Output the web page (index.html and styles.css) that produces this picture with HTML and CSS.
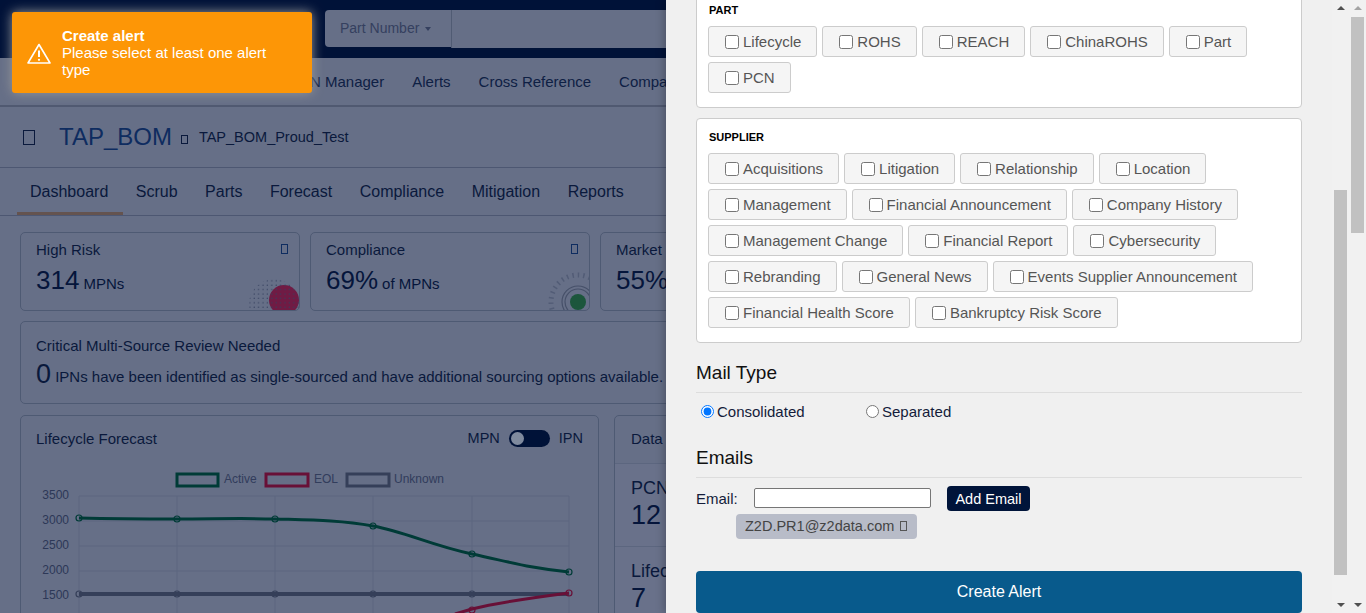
FILE: index.html
```html
<!DOCTYPE html>
<html lang="en">
<head>
  <meta charset="UTF-8" />
  <meta name="viewport" content="width=device-width, initial-scale=1.0" />
  <title>Create Alert | TAP_BOM</title>
  <link rel="stylesheet" href="styles.css">
</head>
<body>

  <div class="page">
    <header class="topbar">
      <div class="part-select">Part Number <span class="caret"></span></div>
      <div class="search-box"></div>
    </header>

    <nav class="mainnav">
      <a>PN Manager</a>
      <a>Alerts</a>
      <a>Cross Reference</a>
      <a>Compare</a>
    </nav>

    <div class="titlerow">
      <span class="tofu tofu-lg"></span>
      <h1>TAP_BOM</h1>
      <span class="tofu tofu-sm"></span>
      <span class="subtitle">TAP_BOM_Proud_Test</span>
    </div>

    <div class="tabs">
      <a class="active">Dashboard</a>
      <a>Scrub</a>
      <a>Parts</a>
      <a>Forecast</a>
      <a>Compliance</a>
      <a>Mitigation</a>
      <a>Reports</a>
    </div>

    <div class="content">
      <div class="stats">
        <div class="card stat">
          <div class="stat-title">High Risk</div>
          <div class="stat-value">314<small>MPNs</small></div>
          <span class="tofu tofu-card"></span>
          <svg class="stat-art" width="60" height="40" viewBox="0 0 60 40">
            <defs>
              <pattern id="dots" width="4.4" height="4.4" patternUnits="userSpaceOnUse">
                <circle cx="2" cy="2" r="0.7" fill="#6a6a80"/>
              </pattern>
            </defs>
            <circle cx="45" cy="30" r="15" fill="#e0204a"/>
            <circle cx="35" cy="34" r="25" fill="url(#dots)"/>
          </svg>
        </div>
        <div class="card stat">
          <div class="stat-title">Compliance</div>
          <div class="stat-value">69%<small>of MPNs</small></div>
          <span class="tofu tofu-card"></span>
          <svg class="stat-art" width="60" height="40" viewBox="0 0 60 40">
            <circle cx="49" cy="32" r="27" fill="none" stroke="#a4a2ae" stroke-width="5" stroke-dasharray="1.5 4"/>
            <circle cx="49" cy="32" r="16" fill="none" stroke="#8c8a94" stroke-width="1.2"/>
            <circle cx="49" cy="32" r="13" fill="none" stroke="#8c8a94" stroke-width="1.2"/>
            <circle cx="49" cy="32" r="8" fill="#38963a"/>
          </svg>
        </div>
        <div class="card stat">
          <div class="stat-title">Market</div>
          <div class="stat-value">55%</div>
        </div>
      </div>

      <div class="card review">
        <div class="review-title">Critical Multi-Source Review Needed</div>
        <div class="review-text"><b>0</b> IPNs have been identified as single-sourced and have additional sourcing options available.</div>
      </div>

      <div class="panels">
        <div class="card forecast">
          <div class="forecast-head">
            <span>Lifecycle Forecast</span>
            <div class="unit-switch">
              <span>MPN</span>
              <span class="toggle"><span class="knob"></span></span>
              <span>IPN</span>
            </div>
          </div>
          <svg class="chart" width="579" height="143" viewBox="20 470 579 143">
            <g class="grid">
              <path d="M79 496H569M79 521H569M79 546H569M79 571H569M79 595H569"/>
              <path d="M79 496V613M177 496V613M275 496V613M373 496V613M472 496V613M569 496V613"/>
            </g>
            <g class="axis">
              <text x="69" y="499">3500</text>
              <text x="69" y="524">3000</text>
              <text x="69" y="549">2500</text>
              <text x="69" y="574">2000</text>
              <text x="69" y="599">1500</text>
            </g>
            <g class="legend">
              <rect x="177" y="474" width="41" height="12" class="s-active"/>
              <text x="224" y="483">Active</text>
              <rect x="266" y="474" width="42" height="12" class="s-eol"/>
              <text x="314" y="483">EOL</text>
              <rect x="347" y="474" width="42" height="12" class="s-unknown"/>
              <text x="394" y="483">Unknown</text>
            </g>
            <path class="line line-thick s-unknown" d="M79 594H569"/>
            <g class="pts s-unknown">
              <circle cx="79" cy="594" r="3"/><circle cx="177" cy="594" r="3"/><circle cx="275" cy="594" r="3"/>
              <circle cx="373" cy="594" r="3"/><circle cx="472" cy="594" r="3"/>
            </g>
            <path class="line s-active" d="M79 518C120 519 140 519 177 519S240 518 275 519S340 520 373 526S430 545 472 554S530 568 569 572"/>
            <g class="pts s-active">
              <circle cx="79" cy="518" r="3"/><circle cx="177" cy="519" r="3"/><circle cx="275" cy="519" r="3"/>
              <circle cx="373" cy="526" r="3"/><circle cx="472" cy="554" r="3"/><circle cx="569" cy="572" r="3"/>
            </g>
            <path class="line s-eol" d="M455 614L472 609C500 602 530 598 569 593"/>
            <g class="pts s-eol">
              <circle cx="472" cy="610" r="3"/><circle cx="569" cy="593" r="3"/>
            </g>
          </svg>
        </div>

        <div class="card data-card">
          <div class="data-head">Data</div>
          <div class="data-row">
            <div class="data-label">PCN</div>
            <div class="data-value">12</div>
          </div>
          <div class="data-row">
            <div class="data-label">Lifecycle</div>
            <div class="data-value">7</div>
          </div>
        </div>
      </div>
    </div>
  </div>

  <div class="overlay"></div>

  <aside class="drawer">
    <div class="drawer-body">
      <section class="group group-part">
        <h5>PART</h5>
        <div class="chips">
          <label class="chip"><input type="checkbox">Lifecycle</label>
          <label class="chip"><input type="checkbox">ROHS</label>
          <label class="chip"><input type="checkbox">REACH</label>
          <label class="chip"><input type="checkbox">ChinaROHS</label>
          <label class="chip"><input type="checkbox">Part</label>
          <label class="chip"><input type="checkbox">PCN</label>
        </div>
      </section>

      <section class="group">
        <h5>SUPPLIER</h5>
        <div class="chips">
          <label class="chip"><input type="checkbox">Acquisitions</label>
          <label class="chip"><input type="checkbox">Litigation</label>
          <label class="chip"><input type="checkbox">Relationship</label>
          <label class="chip"><input type="checkbox">Location</label>
          <label class="chip"><input type="checkbox">Management</label>
          <label class="chip"><input type="checkbox">Financial Announcement</label>
          <label class="chip"><input type="checkbox">Company History</label>
          <label class="chip"><input type="checkbox">Management Change</label>
          <label class="chip"><input type="checkbox">Financial Report</label>
          <label class="chip"><input type="checkbox">Cybersecurity</label>
          <label class="chip"><input type="checkbox">Rebranding</label>
          <label class="chip"><input type="checkbox">General News</label>
          <label class="chip"><input type="checkbox">Events Supplier Announcement</label>
          <label class="chip"><input type="checkbox">Financial Health Score</label>
          <label class="chip"><input type="checkbox">Bankruptcy Risk Score</label>
        </div>
      </section>

      <h3 class="section-title mail-title">Mail Type</h3>
      <div class="radios">
        <label class="radio"><input type="radio" name="mailType" checked>Consolidated</label>
        <label class="radio"><input type="radio" name="mailType">Separated</label>
      </div>

      <h3 class="section-title">Emails</h3>
      <div class="email-row">
        <label class="email-label">Email:</label>
        <input class="email-input" type="text">
        <button class="add-email">Add Email</button>
      </div>
      <div class="email-tag">Z2D.PR1@z2data.com <span class="tofu tofu-tag"></span></div>

      <button class="create-alert">Create Alert</button>
    </div>

    <div class="scrollbar">
      <span class="arrow-up"></span>
      <div class="track"><div class="thumb thumb-inner"></div></div>
      <span class="arrow-down"></span>
    </div>
    <div class="scrollbar">
      <span class="arrow-up arrow-off"></span>
      <div class="track"><div class="thumb thumb-outer"></div></div>
      <span class="arrow-down"></span>
    </div>
  </aside>

  <div class="toast">
    <svg class="toast-icon" width="24" height="21" viewBox="0 0 24 21">
      <path d="M12 1.5L23 20H1Z" fill="none" stroke="#fff" stroke-width="1.6" stroke-linejoin="round"/>
      <path d="M12 7.5V14" stroke="#fff" stroke-width="2"/>
      <circle cx="12" cy="16.8" r="1.1" fill="#fff"/>
    </svg>
    <div class="toast-text">
      <strong>Create alert</strong>
      <div>Please select at least one alert type</div>
    </div>
  </div>

</body>
</html>
```

FILE: styles.css
```css
html, body {
  margin: 0;
  height: 613px;
  overflow: hidden;
}

body {
  font-family: 'Liberation Sans', Arial, sans-serif;
  color: #141c3a;
  background: #ccc8d0;
}

.page {
  width: 1366px;
  height: 613px;
  overflow: hidden;
}

.topbar {
  height: 58px;
  box-sizing: border-box;
  background: #000e32;
  padding: 10px 0 0 325px;
  display: flex;
  align-items: flex-start;
}

.part-select {
  width: 126px;
  height: 37px;
  box-sizing: border-box;
  padding-left: 15px;
  line-height: 36px;
  font-size: 14px;
  color: #6a6a80;
  background: #ccc8d0;
  border-radius: 4px 0 0 4px;
}

.caret {
  display: inline-block;
  margin-left: 2px;
  vertical-align: 2px;
  border-top: 4px solid #6a6a80;
  border-left: 3px solid transparent;
  border-right: 3px solid transparent;
}

.search-box {
  flex: 1;
  height: 38px;
  background: #ccc8d0;
  border-left: 1px solid #a0a0a8;
}

.mainnav {
  height: 49px;
  box-sizing: border-box;
  padding-left: 300px;
  display: flex;
  align-items: center;
  gap: 28px;
  font-size: 15px;
  color: #1c2a4a;
  border-bottom: 2px solid #a09ca4;
}

.mainnav a {
  white-space: nowrap;
}

.titlerow {
  height: 61px;
  box-sizing: border-box;
  padding-left: 23px;
  display: flex;
  align-items: center;
  border-bottom: 1px solid #9a98a6;
}

.titlerow h1 {
  margin: 0 9px 0 24px;
  font-size: 24px;
  font-weight: 400;
  color: #1c4282;
}

.subtitle {
  margin-left: 11px;
  font-size: 14.5px;
}

.tofu {
  display: inline-block;
  box-sizing: border-box;
  border: 1px solid #141c3a;
}

.tofu-lg {
  width: 12px;
  height: 15px;
}

.tofu-sm {
  width: 7px;
  height: 9px;
  margin-top: 5px;
}

.tofu-card {
  position: absolute;
  top: 11px;
  right: 11px;
  width: 7px;
  height: 10px;
  border-color: #1c4282;
}

.tofu-tag {
  width: 7px;
  height: 10px;
  margin-left: 2px;
  border-color: #555;
}

.tabs {
  height: 48px;
  box-sizing: border-box;
  padding-left: 17px;
  display: flex;
  border-bottom: 1px solid #9a98a6;
  font-size: 16px;
}

.tabs a {
  padding: 15px 14.5px 0 13px;
  height: 47px;
  box-sizing: border-box;
}

.tabs a.active {
  border-bottom: 3px solid #c89060;
}

.content {
  padding: 16px 0 0 20px;
  width: 1400px;
}

.card {
  box-sizing: border-box;
  border: 1px solid #9c9ea8;
  border-radius: 5px;
}

.stats {
  display: flex;
  gap: 10px;
}

.stat {
  position: relative;
  width: 280px;
  height: 79px;
  padding: 8px 15px;
  overflow: hidden;
}

.stat-title {
  font-size: 15px;
  line-height: 17px;
}

.stat-value {
  margin-top: 7px;
  font-size: 26px;
  line-height: 30px;
  color: #0a1538;
}

.stat-value small {
  margin-left: 4px;
  font-size: 15px;
}

.stat-art {
  position: absolute;
  right: 0;
  bottom: 0;
}

.review {
  width: 1326px;
  height: 83px;
  margin-top: 10px;
  padding: 15px;
}

.review-title {
  font-size: 15px;
  line-height: 17px;
}

.review-text {
  margin-top: 5px;
  font-size: 15px;
  line-height: 30px;
}

.review-text b {
  font-size: 27px;
  font-weight: 400;
  vertical-align: -1px;
}

.panels {
  display: flex;
  gap: 15px;
  margin-top: 11px;
}

.forecast {
  width: 579px;
  height: 260px;
}

.forecast-head {
  display: flex;
  justify-content: space-between;
  align-items: center;
  padding: 14px 15px 0;
  font-size: 15px;
  line-height: 17px;
}

.unit-switch {
  display: flex;
  align-items: center;
  gap: 9px;
  font-size: 14.5px;
}

.toggle {
  width: 41px;
  height: 17px;
  box-sizing: border-box;
  padding: 2px;
  background: #000e32;
  border-radius: 9px;
}

.knob {
  display: block;
  width: 13px;
  height: 13px;
  background: #fff;
  border-radius: 50%;
}

.chart {
  display: block;
  margin: 23px 0 0 -1px;
}

.grid path {
  fill: none;
  stroke: #b8b6c0;
  stroke-width: 1;
}

.axis text {
  font-size: 12px;
  fill: #5a5a70;
  text-anchor: end;
}

.legend text {
  font-size: 12px;
  fill: #64647a;
}

.legend rect {
  fill: none;
  stroke-width: 3;
}

.line {
  fill: none;
  stroke-width: 3;
}

.line-thick {
  stroke-width: 4;
}

.pts circle {
  fill: none;
  stroke-width: 1.2;
}

.s-active { stroke: #006030; }
.s-eol { stroke: #d00a30; }
.s-unknown { stroke: #6a6874; }

.data-card {
  width: 720px;
  height: 260px;
}

.data-head {
  height: 47px;
  box-sizing: border-box;
  padding: 14px 16px 0;
  font-size: 15px;
  line-height: 17px;
}

.data-row {
  height: 83px;
  box-sizing: border-box;
  padding: 14px 16px 0;
  background: #d2cdd6;
  border-top: 1px solid #b8b6c0;
}

.data-label {
  font-size: 18px;
  line-height: 20px;
}

.data-value {
  margin-top: 1px;
  font-size: 27px;
  line-height: 32px;
  color: #0a1538;
}

.overlay {
  position: absolute;
  inset: 0;
  background: rgba(0, 22, 62, 0.5);
}

.drawer {
  position: absolute;
  top: 0;
  right: 0;
  width: 700px;
  height: 613px;
  overflow: hidden;
  display: flex;
  background: #f0f0f0;
  box-shadow: -2px 0 8px rgba(0, 0, 0, 0.25);
}

.drawer-body {
  width: 606px;
  margin: -31px 30px 0 30px;
}

.group {
  box-sizing: border-box;
  background: #fff;
  border: 1px solid #ccc;
  border-radius: 4px;
  margin-bottom: 10px;
  padding: 12px 11px 14px;
}

.group-part {
  padding-top: 34px;
}

.group h5 {
  margin: 0 0 9px 1px;
  font-size: 11px;
  line-height: 13px;
  font-weight: 700;
  color: #000;
}

.chips {
  display: flex;
  flex-wrap: wrap;
  gap: 5px;
}

.chip {
  display: flex;
  align-items: center;
  height: 31px;
  box-sizing: border-box;
  padding: 0 15px 0 16px;
  font-size: 15px;
  color: #555;
  background: #f5f5f5;
  border: 1px solid #ccc;
  border-radius: 3px;
}

.chip input {
  width: 14px;
  height: 14px;
  margin: 0 4px 0 0;
}

.section-title {
  margin: 0;
  height: 39px;
  box-sizing: border-box;
  padding-top: 8px;
  font-size: 19px;
  line-height: 22px;
  font-weight: 400;
  color: #111;
  border-bottom: 1px solid #ddd;
}

.mail-title {
  margin-top: 11px;
}

.radios {
  display: flex;
  height: 46px;
  padding: 10px 0 0 5px;
  box-sizing: border-box;
  font-size: 15px;
}

.radio {
  width: 165px;
  display: flex;
  align-items: flex-start;
  line-height: 17px;
}

.radio input {
  margin: 2px 3px 0 0;
}

.email-row {
  display: flex;
  align-items: center;
  height: 25px;
  margin-top: 8px;
  font-size: 15px;
}

.email-label {
  width: 58px;
}

.email-input {
  width: 177px;
  height: 20px;
  box-sizing: border-box;
  margin: 0 16px 2px 0;
  border: 1px solid #767676;
  border-radius: 2px;
  background: #fff;
}

.add-email {
  width: 83px;
  height: 25px;
  padding: 0;
  border: none;
  border-radius: 4px;
  background: #00143a;
  color: #fff;
  font-family: inherit;
  font-size: 14.5px;
}

.email-tag {
  display: inline-block;
  margin: 3px 0 0 40px;
  height: 25px;
  box-sizing: border-box;
  padding: 0 10px 0 9px;
  line-height: 25px;
  font-size: 14.5px;
  color: #444;
  background: #b8bcc8;
  border-radius: 4px;
}

.create-alert {
  display: block;
  width: 606px;
  height: 42px;
  margin-top: 32px;
  border: none;
  border-radius: 4px;
  background: #085a8c;
  color: #fff;
  font-family: inherit;
  font-size: 16px;
}

.scrollbar {
  width: 17px;
  flex: none;
  height: 613px;
  display: flex;
  flex-direction: column;
  align-items: center;
  background: #f1f1f1;
}

.arrow-up,
.arrow-down {
  flex: none;
  width: 0;
  height: 0;
  border-left: 4px solid transparent;
  border-right: 4px solid transparent;
}

.arrow-up {
  margin: 6px 0 7px;
  border-bottom: 4px solid #505050;
}

.arrow-off {
  border-bottom-color: #a3a3a3;
}

.arrow-down {
  margin: 7px 0 6px;
  border-top: 4px solid #505050;
}

.track {
  flex: 1;
  width: 13px;
}

.thumb {
  width: 13px;
  background: #c1c1c1;
}

.thumb-inner {
  height: 385px;
  margin-top: 173px;
}

.thumb-outer {
  height: 216px;
}

.toast {
  position: absolute;
  top: 12px;
  left: 12px;
  width: 300px;
  height: 81px;
  box-sizing: border-box;
  padding-left: 50px;
  padding-right: 40px;
  display: flex;
  align-items: center;
  color: #fff;
  font-size: 15px;
  line-height: 17px;
  background: #fd9606;
  border-radius: 3px;
  box-shadow: 0 0 12px #999;
}

.toast-icon {
  position: absolute;
  left: 15px;
  top: 31px;
}
```
